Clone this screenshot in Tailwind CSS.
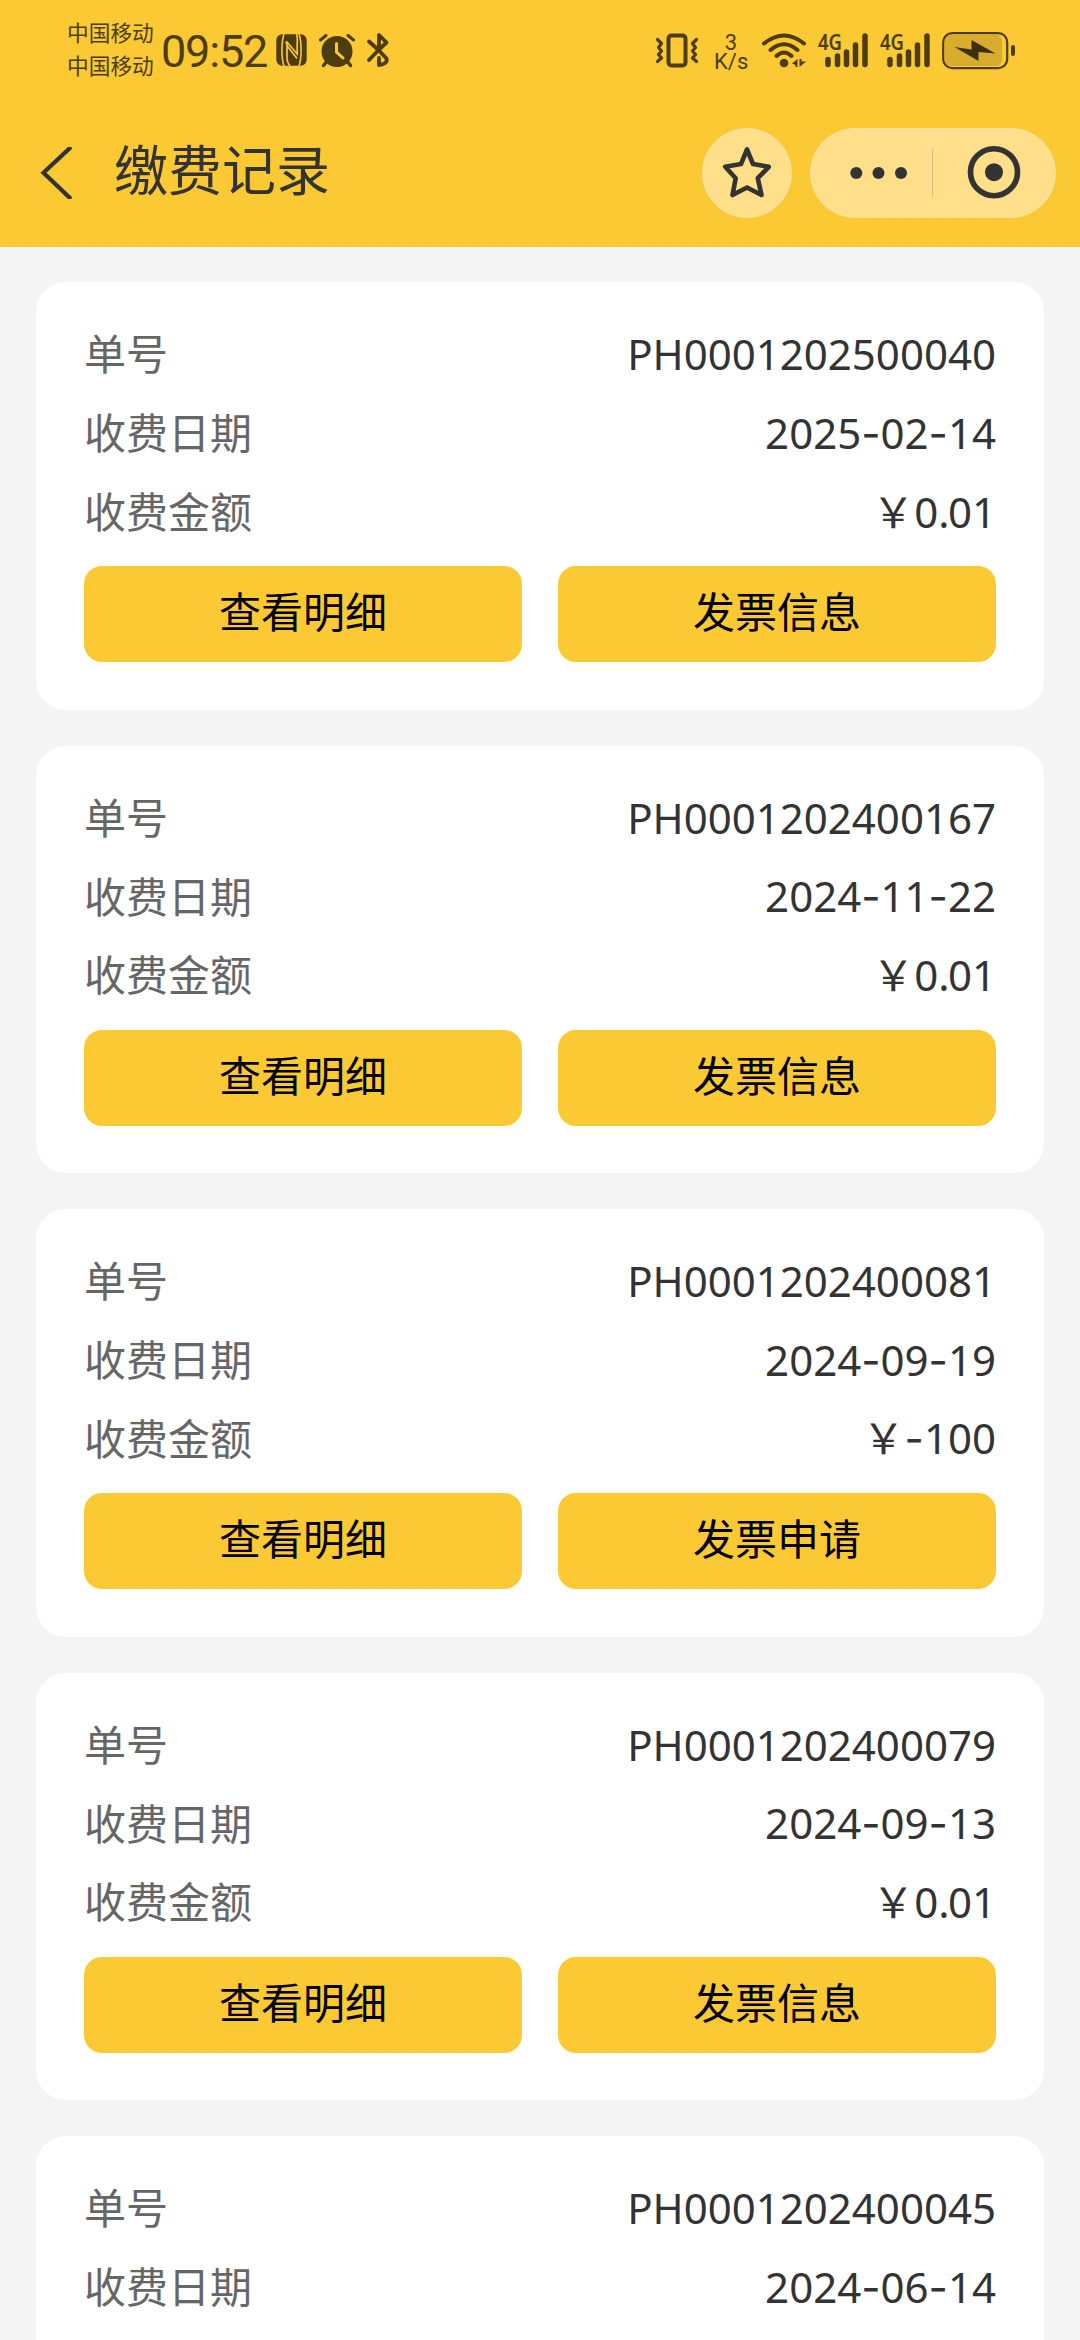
<!DOCTYPE html>
<html lang="zh-CN">
<head>
<meta charset="utf-8">
<title>缴费记录</title>
<script src="https://cdn.jsdelivr.net/npm/@tailwindcss/browser@4"></script>
</head>
<body class="w-[1080px] h-[2340px] overflow-hidden bg-[#f4f4f4] font-['Noto_Sans','Noto_Sans_CJK_SC',sans-serif] text-[#333333]">
<header class="h-[247px] bg-[#fbc934]">
  <!-- status bar -->
  <div class="h-[102px] flex items-start justify-between pl-[67px] pr-[64px] text-[#4d3d0e]">
    <div class="flex items-start">
      <div class="w-[94px] pt-[15px] text-[21.7px] leading-[33px] font-['Noto_Sans_CJK_SC',sans-serif] whitespace-nowrap">
        <div>中国移动</div>
        <div>中国移动</div>
      </div>
      <div class="w-[115px] pt-[21px] text-[45px] leading-[61px] font-['Roboto',sans-serif] tracking-[-1.2px] whitespace-nowrap">09:52</div>
      <svg class="w-[31px] h-[32px] mt-[34px]" viewBox="276 34 31 32" fill="none">
        <rect x="276.300" y="34.200" width="30.400" height="31.600" rx="6" fill="currentColor"/>
        <path d="M284 34C281.200 42 281.200 58 284 66M299 34C301.800 42 301.800 58 299 66" stroke="#fbc934" stroke-width="1.600"/>
        <path d="M286.500 45L297 58.500M287 41.500V58C287 61 288 64 290 66M286 41.500L287.500 47M296.500 34C297.500 37 297.500 40 297.200 43V54L286.500 41.500" stroke="#fbc934" stroke-width="1.700"/>
      </svg>
      <svg class="w-[36px] h-[35px] mt-[33px] ml-[12px]" viewBox="319 33 36 35" fill="none" stroke="currentColor" stroke-linecap="round">
        <circle cx="337" cy="51.500" r="15.500" fill="currentColor" stroke="none"/>
        <path d="M320.500 40L326 35.500M353.500 40L348 35.500" stroke-width="3"/>
        <path d="M327 61L323.500 65.500M347 61L350.500 65.500" stroke-width="3.500"/>
        <path d="M336.500 43.500V52L343 58" stroke="#fbc934" stroke-width="3"/>
      </svg>
      <svg class="w-[24px] h-[36px] mt-[32px] ml-[11px]" viewBox="366 32 24 36" fill="none" stroke="currentColor" stroke-width="3.800" stroke-linecap="round" stroke-linejoin="round">
        <path d="M369 41.500L378.500 50L386.500 42.500L379 35V46M369 60L378.500 50L386.500 58.500Q388 64 379 65V58"/>
      </svg>
    </div>
    <div class="flex items-start">
      <svg class="w-[42px] h-[35px] mt-[33px]" viewBox="656 33 42 35" fill="none" stroke="currentColor">
        <rect x="668.500" y="35.500" width="17" height="30" rx="3" stroke-width="4"/>
        <path d="M657.500 39.500L661.500 43.500L658.500 47.500L661.500 51L658.500 54.500L661.500 58L657.500 61.500M696.500 39.500L692.500 43.500L695.500 47.500L692.500 51L695.500 54.500L692.500 58L696.500 61.500" stroke-width="3.200" stroke-linecap="round" stroke-linejoin="round"/>
      </svg>
      <div class="w-[34px] ml-[16px] pt-[33px] text-center font-['Roboto',sans-serif] text-[22px] leading-[19px] whitespace-nowrap">
        <div>3</div>
        <div>K/s</div>
      </div>
      <svg class="w-[44px] h-[35px] mt-[33px] ml-[14px]" viewBox="762 33 44 35" fill="none" stroke="currentColor" stroke-width="4" stroke-linecap="round">
        <path d="M764 43.500Q784 27.500 804 43.500M770.500 50Q784 38.500 797.500 50M776.500 56Q784 49 791.500 56"/>
        <circle cx="784" cy="63" r="4.300" fill="currentColor" stroke="none"/>
        <path d="M797.500 59V67H795.500V65L792 63.500ZM799.500 67V59H801.500V61.500L806 61.500Z" fill="currentColor" stroke="none"/>
      </svg>
      <svg class="w-[52px] h-[48px] mt-[20px] ml-[11px]" viewBox="817 20 52 48">
        <text x="818" y="50" font-size="22" font-weight="600" textLength="24" lengthAdjust="spacingAndGlyphs" fill="currentColor">4G</text>
        <path d="M828 59.500V64.500M837.500 56V64.500M846.500 52V64.500M855.500 45V64.500M865 36V64.500" stroke="currentColor" stroke-width="5.500" stroke-linecap="round"/>
      </svg>
      <svg class="w-[52px] h-[48px] mt-[20px] ml-[10px]" viewBox="817 20 52 48">
        <text x="818" y="50" font-size="22" font-weight="600" textLength="24" lengthAdjust="spacingAndGlyphs" fill="currentColor">4G</text>
        <path d="M828 59.500V64.500M837.500 56V64.500M846.500 52V64.500M855.500 45V64.500M865 36V64.500" stroke="currentColor" stroke-width="5.500" stroke-linecap="round"/>
      </svg>
      <svg class="w-[74px] h-[38px] mt-[32px] ml-[11px]" viewBox="942 32 74 38">
        <rect x="945" y="35" width="57" height="31" rx="6" fill="#d8ac2d"/>
        <rect x="943.200" y="33.200" width="64" height="35" rx="9" fill="none" stroke="currentColor" stroke-width="2.200"/>
        <rect x="1011" y="45" width="4" height="11" rx="2" fill="currentColor"/>
        <path d="M954.500 47L971.500 49.500L971.500 40L995.500 53.500L978.500 52L978.500 61Z" fill="#3d300b"/>
      </svg>
    </div>
  </div>
  <!-- title bar -->
  <div class="h-[145px] flex items-start pl-[40px] pr-[24px]">
    <svg class="w-[32px] h-[52px] mt-[45px]" viewBox="40 147 32 52" fill="none" stroke="#333333" stroke-width="4.200"><path d="M71 147L43.500 172.800L71 199"/></svg>
    <h1 class="ml-[42px] mt-[26px] text-[54px] leading-[80px] font-['Noto_Sans_CJK_SC',sans-serif]">缴费记录</h1>
    <div class="ml-auto mt-[26px] flex gap-[18px]">
      <div class="size-[90px] rounded-full border border-[#f6e3ac] bg-[#ffdf8a] flex items-center justify-center">
        <svg class="size-[88px]" viewBox="703 129 88 88" fill="none" stroke="#333333" stroke-width="4.600" stroke-linejoin="round"><path d="M747 149.500L753 164L768.800 166.800L757.800 178.200L761.500 195L747 187.500L732.500 195L735.700 178.200L725.200 166.800L741 164Z"/></svg>
      </div>
      <div class="w-[246px] h-[90px] rounded-full border border-[#f6e3ac] bg-[#ffdf8a]">
        <svg class="w-[244px] h-[88px]" viewBox="811 129 244 88" fill="#333333">
          <circle cx="856.300" cy="173" r="6"/><circle cx="878.500" cy="173" r="6"/><circle cx="901" cy="173" r="6"/>
          <rect x="932" y="149" width="1" height="48" fill="#d2c08a"/>
          <circle cx="994" cy="172.200" r="23.500" fill="none" stroke="#333333" stroke-width="5.600"/>
          <circle cx="994" cy="172.200" r="9"/>
        </svg>
      </div>
    </div>
  </div>
</header>
<main id="list" class="h-[2093px] overflow-hidden pt-[35px] px-[36px] flex flex-col gap-[36px]"></main>

<script>
  const records = [
    ['PH0001202500040', '2025-02-14', '0.01', '发票信息'],
    ['PH0001202400167', '2024-11-22', '0.01', '发票信息'],
    ['PH0001202400081', '2024-09-19', '-100', '发票申请'],
    ['PH0001202400079', '2024-09-13', '0.01', '发票信息'],
    ['PH0001202400045', '2024-06-14'],
  ];
  const dash = s => s.replaceAll('-', `<span class="font-['Inter']">-</span>`)
    .replace('.', '<span class="tracking-[-1.5px]">.</span>');
  const row = (label, value) => `
    <div class="h-[78.7px] flex items-center justify-between">
      <span class="text-[#666666] font-['Noto_Sans_CJK_SC',sans-serif] leading-[60px] pb-[4px]">${label}</span>
      <span class="leading-[60px]">${value}</span>
    </div>`;
  document.getElementById('list').innerHTML = records.map(([no, date, amount, action]) => `
    <section class="h-[427.5px] shrink-0 rounded-[30px] bg-white px-[48px] pt-[33px] text-[42px] whitespace-nowrap">
      ${row('单号', no)}
      ${row('收费日期', dash(date))}
      ${amount ? `${row('收费金额', `<span class="font-['Noto_Sans_CJK_SC',sans-serif] leading-[50px]">￥</span>` + dash(amount))}
      <div class="mt-[15px] grid grid-cols-2 gap-[36px] font-['Noto_Sans_CJK_SC',sans-serif] text-black">
        <button class="h-[96px] rounded-[18px] bg-[#fbc934] leading-[60px] pb-[8px]">查看明细</button>
        <button class="h-[96px] rounded-[18px] bg-[#fbc934] leading-[60px] pb-[8px]">${action}</button>
      </div>` : ''}
    </section>`).join('');
</script>
</body>
</html>
